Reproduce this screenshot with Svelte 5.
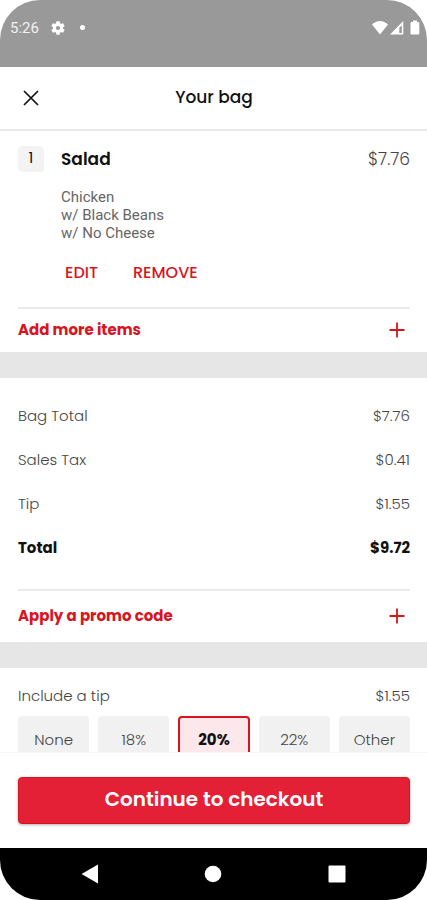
<script lang="ts">
	type Row = {
		label: string;
		amount: string;
		total?: boolean;
	};

	const item = {
		quantity: 1,
		name: 'Salad',
		price: '$7.76',
		options: ['Chicken', 'w/ Black Beans', 'w/ No Cheese']
	};

	const rows: Row[] = [
		{ label: 'Bag Total', amount: '$7.76' },
		{ label: 'Sales Tax', amount: '$0.41' },
		{ label: 'Tip', amount: '$1.55' },
		{ label: 'Total', amount: '$9.72', total: true }
	];

	const tips = ['None', '18%', '20%', '22%', 'Other'];

	let selectedTip = $state('20%');
</script>

{#snippet plus()}
	<svg class="plus" viewBox="0 0 16 16" aria-hidden="true">
		<path d="M8 0.5v15M0.5 8h15" stroke="currentColor" stroke-width="1.8" fill="none" />
	</svg>
{/snippet}

<div class="phone">
	<div class="status-bar">
		<div class="status-left">
			<span class="clock">5:26</span>
			<svg class="gear" viewBox="2 2 20 20" aria-hidden="true">
				<path
					fill="currentColor"
					d="M19.14 12.94c.04-.3.06-.61.06-.94 0-.32-.02-.64-.07-.94l2.03-1.58a.49.49 0 0 0 .12-.61l-1.92-3.32a.49.49 0 0 0-.59-.22l-2.39.96a7 7 0 0 0-1.62-.94l-.36-2.54a.48.48 0 0 0-.48-.41h-3.84a.47.47 0 0 0-.47.41l-.36 2.54c-.59.24-1.13.57-1.62.94l-2.39-.96a.48.48 0 0 0-.59.22L2.74 8.87a.48.48 0 0 0 .12.61l2.03 1.58c-.05.3-.09.63-.09.94s.02.64.07.94l-2.03 1.58a.49.49 0 0 0-.12.61l1.92 3.32c.12.22.37.29.59.22l2.39-.96c.5.38 1.03.7 1.62.94l.36 2.54c.05.24.24.41.48.41h3.84c.24 0 .44-.17.47-.41l.36-2.54a7 7 0 0 0 1.62-.94l2.39.96c.22.08.47 0 .59-.22l1.92-3.32a.48.48 0 0 0-.12-.61zM12 15a3 3 0 1 1 0-6 3 3 0 0 1 0 6z"
				/>
			</svg>
			<span class="dot"></span>
		</div>
		<svg class="status-icons" viewBox="0 0 48 16" aria-hidden="true">
			<path fill="currentColor" d="M0 4.6C4.4-.1 11.6-.1 16 4.600L8 14.500z" />
			<path fill="currentColor" fill-rule="evenodd" d="M18 14.500 31.300 1v13.500zM27.300 12.900h2.500V5.200l-2.500 2.500z" />
			<path
				fill="currentColor"
				d="M41 .5h4v1.500h1.300q1 0 1 1v10.500q0 1-1 1h-6.800q-1 0-1-1V3q0-1 1-1H41z"
			/>
		</svg>
	</div>

	<header>
		<button class="close" aria-label="Close">
			<svg viewBox="0 0 16 16" aria-hidden="true">
				<path d="M1 1l14 14M15 1L1 15" stroke="currentColor" stroke-width="1.7" fill="none" />
			</svg>
		</button>
		<h1>Your bag</h1>
	</header>

	<main>
		<section class="bag">
			<div class="item">
				<span class="quantity">{item.quantity}</span>
				<div class="item-body">
					<div class="item-head">
						<h2>{item.name}</h2>
						<span class="price">{item.price}</span>
					</div>
					<ul class="options">
						{#each item.options as option}
							<li>{option}</li>
						{/each}
					</ul>
					<div class="item-actions">
						<button>EDIT</button>
						<button>REMOVE</button>
					</div>
				</div>
			</div>
			<button class="add-row">
				<span>Add more items</span>
				{@render plus()}
			</button>
		</section>

		<section class="summary">
			<dl>
				{#each rows as row}
					<div class="row" class:total={row.total}>
						<dt>{row.label}</dt>
						<dd>{row.amount}</dd>
					</div>
				{/each}
			</dl>
			<button class="add-row promo">
				<span>Apply a promo code</span>
				{@render plus()}
			</button>
		</section>

		<section class="tip">
			<div class="tip-head">
				<span>Include a tip</span>
				<span>$1.55</span>
			</div>
			<div class="tip-options">
				{#each tips as tip}
					<button
						class:selected={tip === selectedTip}
						aria-pressed={tip === selectedTip}
						onclick={() => (selectedTip = tip)}
					>
						{tip}
					</button>
				{/each}
			</div>
		</section>
	</main>

	<footer>
		<button class="checkout">Continue to checkout</button>
	</footer>

	<nav>
		<button aria-label="Back">
			<svg viewBox="0 0 18 20" aria-hidden="true"><path d="M0.5 10L17 0.5v19z" fill="currentColor" /></svg>
		</button>
		<button aria-label="Home">
			<svg viewBox="0 0 18 20" aria-hidden="true"><circle cx="9" cy="10" r="8.3" fill="currentColor" /></svg>
		</button>
		<button aria-label="Recent apps">
			<svg viewBox="0 0 18 20" aria-hidden="true"><rect x="0.5" y="1.5" width="17" height="17" rx="1" fill="currentColor" /></svg>
		</button>
	</nav>
</div>

<style>
	:global(body) {
		background: #fff;
	}

	.phone {
		display: flex;
		flex-direction: column;
		height: 100vh;
		overflow: hidden;
		border-radius: 40px;
		background: #fff;
		color: #111;
		font-family: Poppins, Inter, sans-serif;
		font-size: 15px;
	}

	button {
		border: none;
		padding: 0;
		background: none;
		color: inherit;
		font: inherit;
		cursor: pointer;
	}

	h1,
	h2,
	ul,
	dl,
	dd {
		margin: 0;
		padding: 0;
	}

	svg {
		display: block;
	}

	.status-bar {
		display: flex;
		flex: none;
		justify-content: space-between;
		align-items: center;
		height: 55px;
		padding: 0 7px 12px 10px;
		background: #999;
		color: #fff;
	}

	.status-left {
		display: flex;
		align-items: center;
	}

	.clock {
		color: #f2f2f2;
		font-family: Roboto, sans-serif;
		font-size: 15px;
		line-height: 20px;
	}

	.gear {
		width: 14px;
		height: 14px;
		margin: 0 15px 0 12px;
	}

	.dot {
		width: 5px;
		height: 5px;
		border-radius: 50%;
		background: #fff;
	}

	.status-icons {
		width: 48px;
		height: 16px;
	}

	header {
		display: grid;
		flex: none;
		grid-template-columns: 26px 1fr 26px;
		align-items: center;
		height: 62px;
		padding: 0 17px 0 18px;
		border-bottom: 2px solid #e8e8e8;
	}

	.close {
		display: flex;
		justify-content: center;
		align-items: center;
		height: 26px;
	}

	.close svg {
		width: 16px;
		height: 16px;
	}

	h1 {
		padding-bottom: 2px;
		font-size: 17px;
		line-height: 24px;
		font-weight: 500;
		text-align: center;
	}

	main {
		flex: 1;
		min-height: 0;
		overflow-y: auto;
		scrollbar-width: none;
	}

	section {
		padding: 0 17px 0 18px;
	}

	.bag,
	.summary {
		border-bottom: 26px solid #e6e6e6;
	}

	.item {
		display: flex;
		gap: 17px;
		padding: 15px 0 20px;
	}

	.quantity {
		width: 26px;
		height: 26px;
		border-radius: 4px;
		background: #f3f3f3;
		line-height: 24px;
		text-align: center;
	}

	.item-body {
		flex: 1;
	}

	.item-head {
		display: flex;
		justify-content: space-between;
		line-height: 26px;
	}

	h2 {
		font-size: 17px;
		font-weight: 600;
	}

	.price {
		color: #444;
		font-size: 17px;
		font-weight: 300;
	}

	.options {
		margin-top: 16px;
		color: #666;
		font-family: Roboto, sans-serif;
		font-size: 15px;
		line-height: 18px;
		list-style: none;
	}

	.item-actions {
		display: flex;
		gap: 35px;
		padding: 17px 4px 0;
		color: #d9141e;
		font-size: 16px;
		font-weight: 500;
		line-height: 28px;
	}

	.add-row {
		display: flex;
		justify-content: space-between;
		align-items: center;
		width: 100%;
		height: 45px;
		padding: 0 5px 2px 0;
		border-top: 2px solid #ebebeb;
		color: #d9141e;
		font-weight: 700;
	}

	.add-row.promo {
		height: 53px;
	}

	.plus {
		width: 16px;
		height: 16px;
	}

	.summary dl {
		padding: 16px 0 19px;
	}

	.row {
		display: flex;
		justify-content: space-between;
		color: #444;
		font-weight: 300;
		line-height: 44px;
	}

	.row.total {
		color: #111;
		font-weight: 700;
	}

	.tip-head {
		display: flex;
		justify-content: space-between;
		padding-top: 16px;
		color: #444;
		font-weight: 300;
		line-height: 24px;
	}

	.tip-options {
		display: grid;
		grid-template-columns: repeat(5, 1fr);
		gap: 9px;
		padding: 8px 0 24px;
	}

	.tip-options button {
		height: 46px;
		border: 2px solid #f1f1f1;
		border-radius: 4px;
		background: #f1f1f1;
		color: #444;
		font-weight: 300;
	}

	.tip-options button.selected {
		border-color: #d9141e;
		background: #fce8ea;
		color: #111;
		font-weight: 700;
	}

	footer {
		flex: none;
		padding: 24px 17px 24px 18px;
		border-top: 1px solid #f8f8f8;
	}

	.checkout {
		width: 100%;
		height: 47px;
		padding-bottom: 4px;
		border: 1px solid #d9141e;
		border-radius: 4px;
		background: #e42037;
		box-shadow: 0 1px 3px rgba(0, 0, 0, 0.3);
		color: #fff;
		font-size: 20px;
		font-weight: 600;
	}

	nav {
		display: grid;
		flex: none;
		grid-template-columns: repeat(3, 1fr);
		height: 52px;
		padding: 0 28px;
		background: #000;
		color: #fff;
	}

	nav button {
		display: flex;
		justify-content: center;
		align-items: center;
	}

	nav svg {
		width: 18px;
		height: 20px;
	}
</style>
